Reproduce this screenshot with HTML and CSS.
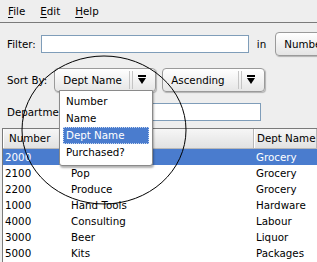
FILE: index.html
```html
<!DOCTYPE html>
<html lang="en">
<head>
  <meta charset="UTF-8" />
  <title>Department Table</title>
  <link rel="stylesheet" href="styles.css">
</head>
<body>
  <div class="menubar">
    <span class="menu"><u>F</u>ile</span>
    <span class="menu"><u>E</u>dit</span>
    <span class="menu"><u>H</u>elp</span>
  </div>

  <div class="form">
    <div class="row">
      <span class="label">Filter:</span>
      <input class="field filter-field" type="text" />
      <span class="in">in</span>
      <div class="button">Number</div>
    </div>

    <div class="row">
      <span class="label">Sort By:</span>
      <div class="combo sort-combo">
        <span class="combo-text">Dept Name</span>
        <span class="combo-sep"></span>
        <span class="combo-arrow"></span>
      </div>
      <div class="combo order-combo">
        <span class="combo-text">Ascending</span>
        <span class="combo-sep"></span>
        <span class="combo-arrow"></span>
      </div>
    </div>

    <div class="row">
      <span class="label">Department:</span>
      <input class="field dept-field" type="text" />
    </div>
  </div>

  <div class="table">
    <div class="thead">
      <div class="th col-num">Number</div>
      <div class="th col-name">Name</div>
      <div class="th col-dept">Dept Name</div>
    </div>
    <div class="tr selected"><span class="col-num">2000</span><span class="col-name">Food</span><span class="col-dept">Grocery</span></div>
    <div class="tr"><span class="col-num">2100</span><span class="col-name">Pop</span><span class="col-dept">Grocery</span></div>
    <div class="tr"><span class="col-num">2200</span><span class="col-name">Produce</span><span class="col-dept">Grocery</span></div>
    <div class="tr"><span class="col-num">1000</span><span class="col-name">Hand Tools</span><span class="col-dept">Hardware</span></div>
    <div class="tr"><span class="col-num">4000</span><span class="col-name">Consulting</span><span class="col-dept">Labour</span></div>
    <div class="tr"><span class="col-num">3000</span><span class="col-name">Beer</span><span class="col-dept">Liquor</span></div>
    <div class="tr"><span class="col-num">5000</span><span class="col-name">Kits</span><span class="col-dept">Packages</span></div>
  </div>

  <!-- open combo popup -->
  <div class="popup">
    <div class="item">Number</div>
    <div class="item">Name</div>
    <div class="item active">Dept Name</div>
    <div class="item">Purchased?</div>
  </div>

  <!-- hand drawn circle around the popup -->
  <svg class="circle" width="317" height="262" viewBox="0 0 317 262">
    <ellipse cx="104" cy="130" rx="82" ry="74" fill="none" stroke="#000" stroke-width="1" />
  </svg>
</body>
</html>
```

FILE: styles.css
```css
body {
  margin: 0;
  width: 317px;
  height: 262px;
  overflow: hidden;
  background-color: #eeeeee;
  color: #000;
  font-family: 'DejaVu Sans', sans-serif;
  font-size: 10.3px;
}
.menubar {
  height: 22px;
  display: flex;
  align-items: center;
  gap: 15px;
  padding-left: 8px;
  border-bottom: 1px solid #7a7a7a;
}
.menu u {
  text-decoration-thickness: 1px;
  text-underline-offset: 2px;
}
.form {
  padding: 9px 0 0 7px;
  display: flex;
  flex-direction: column;
  gap: 12px;
}
.row {
  height: 24px;
  display: flex;
  align-items: center;
  white-space: nowrap;
}
.row > * {
  flex-shrink: 0;
}
.row:last-child {
  margin-top: -4px;
}
.label {
  margin-right: 5px;
}
.field {
  box-sizing: border-box;
  height: 18px;
  border: 1px solid #7f9db9;
  background: #fff;
  margin: 0;
  padding: 0 2px;
  font: inherit;
}
.filter-field {
  width: 208px;
}
.in {
  margin: 0 9px 0 8px;
}
.dept-field {
  width: 183px;
}
.button {
  box-sizing: border-box;
  height: 24px;
  padding: 0 12px 0 8px;
  display: flex;
  align-items: center;
  border: 1px solid #9a9a9a;
  border-radius: 4px;
  background: linear-gradient(#ffffff, #e4e4e4);
  box-shadow: 1px 1px 1px rgba(0, 0, 0, 0.25);
}
.combo {
  box-sizing: border-box;
  height: 24px;
  display: flex;
  align-items: center;
  border: 1px solid #9a9a9a;
  border-radius: 4px;
  background: linear-gradient(#ffffff, #e6e6e6);
  box-shadow: 1px 1px 1px rgba(0, 0, 0, 0.25);
}
.sort-combo {
  width: 102px;
  margin-left: 2px;
}
.order-combo {
  width: 103px;
  margin-left: 6px;
}
.combo-text {
  flex: 1;
  padding-left: 8px;
}
.combo-sep {
  width: 2px;
  height: 18px;
  border-left: 1px solid #c4c4c4;
  border-right: 1px solid #c4c4c4;
  margin-right: 5px;
}
.combo-arrow {
  width: 8px;
  height: 10px;
  margin-right: 9px;
  position: relative;
  border-top: 2px solid #000;
  box-sizing: border-box;
}
.combo-arrow::after {
  content: "";
  position: absolute;
  left: 0;
  top: 1px;
  border-left: 4px solid transparent;
  border-right: 4px solid transparent;
  border-top: 6px solid #000;
}
.table {
  margin: 4px 0 0 2px;
  border-top: 1px solid #7a7a7a;
  border-left: 1px solid #7a7a7a;
  background: #fff;
  height: 133px;
  overflow: hidden;
}
.thead {
  display: flex;
  height: 19px;
  background: linear-gradient(#f6f6f6, #e2e2e2);
  border-bottom: 1px solid #b8b8b8;
}
.th {
  box-sizing: border-box;
  border-right: 1px solid #b8b8b8;
  border-left: 1px solid #fff;
  line-height: 19px;
}
.th.col-num {
  padding-left: 5px;
}
.tr {
  display: flex;
  height: 16px;
  line-height: 16px;
}
.tr.selected {
  background-color: #4a7cce;
  color: #fff;
}
.col-num {
  box-sizing: border-box;
  flex-shrink: 0;
  width: 64px;
  padding-left: 2px;
}
.col-name {
  box-sizing: border-box;
  flex-shrink: 0;
  width: 187px;
  padding-left: 4px;
}
.col-dept {
  box-sizing: border-box;
  flex: 1 0 auto;
  padding-left: 2px;
}
.popup {
  position: absolute;
  left: 59px;
  top: 90px;
  width: 94px;
  box-sizing: border-box;
  padding: 2px 3px 4px 3px;
  background: #fff;
  border: 1px solid #8a8a8a;
  border-radius: 0 0 3px 3px;
  box-shadow: 1px 2px 2px rgba(0, 0, 0, 0.3);
}
.item {
  height: 17px;
  line-height: 17px;
  padding-left: 3px;
}
.item.active {
  background-color: #4a7cce;
  color: #fff;
  outline: 1px dotted #c8d8f0;
  outline-offset: -1px;
}
.circle {
  position: absolute;
  left: 0;
  top: 0;
  pointer-events: none;
}
```
